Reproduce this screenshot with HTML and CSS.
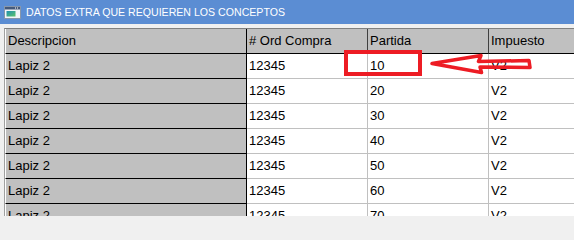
FILE: index.html
```html
<!DOCTYPE html>
<html>
<head>
<meta charset="utf-8">
<link rel="stylesheet" href="styles.css">
</head>
<body>
<div class="window">
  <div class="titlebar">
    <svg class="ticon" width="17" height="13" viewBox="0 0 17 13">
      <defs>
        <linearGradient id="tg" x1="0" x2="1" y1="0" y2="1">
          <stop offset="0" stop-color="#1f8fb0"/>
          <stop offset="1" stop-color="#5cc46a"/>
        </linearGradient>
      </defs>
      <rect x="0.5" y="0.5" width="16" height="12" fill="#f2f5f8" stroke="#8796ab"/>
      <rect x="1" y="1" width="15" height="2.5" fill="#44597a"/>
      <rect x="11" y="1.5" width="1" height="1" fill="#fff"/>
      <rect x="13" y="1.5" width="1" height="1" fill="#fff"/>
      <rect x="2.5" y="5" width="9" height="5.5" fill="url(#tg)"/>
    </svg>
    <span class="title">DATOS EXTRA QUE REQUIEREN LOS CONCEPTOS</span>
  </div>
  <div class="client">
    <div class="grid">
      <div class="row hrow">
        <div class="c desc">Descripcion</div>
        <div class="c">&#35; Ord Compra</div>
        <div class="c">Partida</div>
        <div class="c">Impuesto</div>
      </div>
      <div class="row"><div class="c desc">Lapiz 2</div><div class="c">12345</div><div class="c">10</div><div class="c">V2</div></div>
      <div class="row"><div class="c desc">Lapiz 2</div><div class="c">12345</div><div class="c">20</div><div class="c">V2</div></div>
      <div class="row"><div class="c desc">Lapiz 2</div><div class="c">12345</div><div class="c">30</div><div class="c">V2</div></div>
      <div class="row"><div class="c desc">Lapiz 2</div><div class="c">12345</div><div class="c">40</div><div class="c">V2</div></div>
      <div class="row"><div class="c desc">Lapiz 2</div><div class="c">12345</div><div class="c">50</div><div class="c">V2</div></div>
      <div class="row"><div class="c desc">Lapiz 2</div><div class="c">12345</div><div class="c">60</div><div class="c">V2</div></div>
      <div class="row"><div class="c desc">Lapiz 2</div><div class="c">12345</div><div class="c">70</div><div class="c">V2</div></div>
    </div>
  </div>
  <svg class="annot" width="574" height="216" viewBox="0 0 574 216">
    <rect x="346" y="52" width="74" height="22" fill="none" stroke="#ed1c24" stroke-width="4"/>
    <path d="M432 63.5 L481 55.5 L478.5 61.5 L529 60.5 L530 67.5 L480 67 L481.5 72.5 Z" fill="none" stroke="#ed1c24" stroke-width="3.5" stroke-linejoin="round"/>
  </svg>
</div>
</body>
</html>
```
FILE: styles.css
```css
html, body {
  margin: 0;
  padding: 0;
  width: 574px;
  height: 216px;
  overflow: hidden;
  background: #f0f0f0;
}

.window {
  position: relative;
  width: 574px;
  height: 216px;
  overflow: hidden;
  font-family: "Liberation Sans", Arial, sans-serif;
}

.titlebar {
  height: 24px;
  background: #5b8dd3;
  display: flex;
  align-items: center;
  gap: 5px;
  padding-left: 4px;
  color: #ffffff;
  font-size: 10.6px;
  box-sizing: border-box;
}

.ticon {
  flex: none;
}

.title {
  white-space: nowrap;
}

.client {
  height: 192px;
  padding: 4px 0 0 4px;
  box-sizing: border-box;
  overflow: hidden;
}

.grid {
  border-left: 1px solid #a0a0a0;
  border-top: 1px solid #808080;
}

.row {
  display: grid;
  grid-template-columns: 242px 121px 121px 1fr;
  height: 25px;
}

.c {
  box-sizing: border-box;
  background: #ffffff;
  color: #000000;
  border-right: 1px solid #c0c0c0;
  border-bottom: 1px solid #c0c0c0;
  padding-left: 2px;
  font-size: 13px;
  line-height: 24px;
  white-space: nowrap;
  overflow: hidden;
}

.row .c:last-child {
  border-right: none;
}

.c.desc {
  background: #c0c0c0;
  border-left: 1px solid #ffffff;
  border-right: 1px solid #000000;
  border-bottom: 1px solid #000000;
}

.hrow .c {
  background: #c0c0c0;
  border-right: 1px solid #404040;
  border-bottom: 1px solid #000000;
}

.hrow .c.desc {
  border-right: 1px solid #000000;
}

.annot {
  position: absolute;
  left: 0;
  top: 0;
  pointer-events: none;
}
```
